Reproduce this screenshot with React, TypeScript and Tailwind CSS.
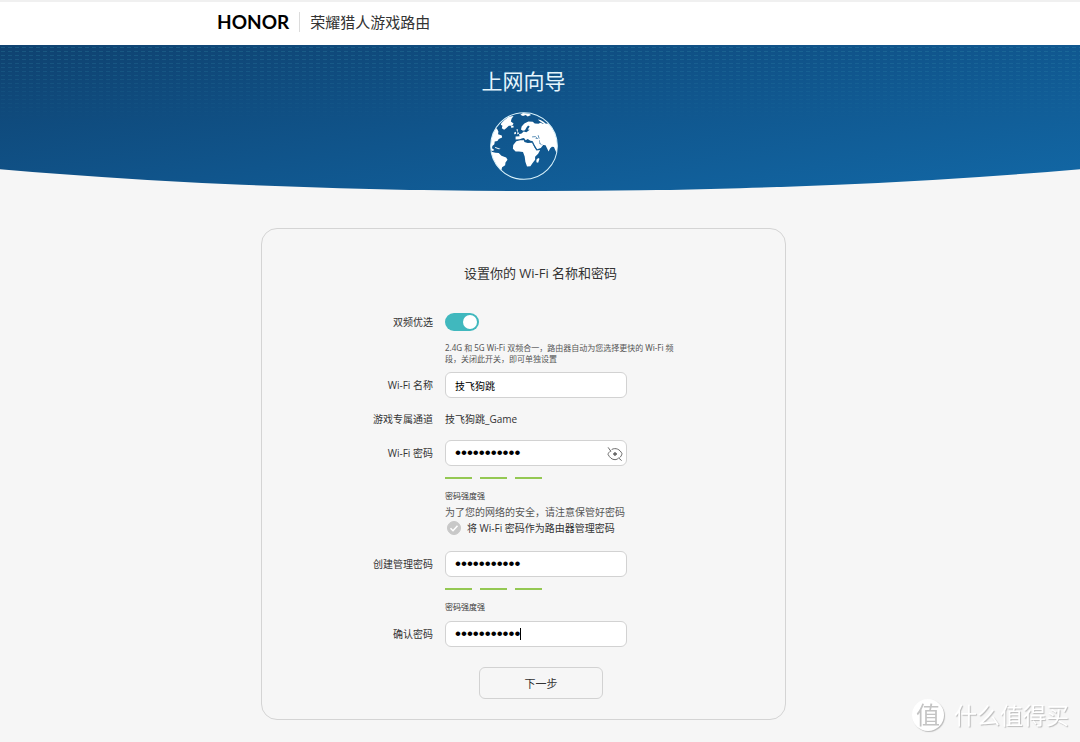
import { useState } from 'react';
import type { InputHTMLAttributes, ReactNode } from 'react';

function Globe() {
  return (
    <svg viewBox="0 0 202 202" className="w-[68px] h-[68px]" aria-hidden="true">
      <defs>
        <clipPath id="disc">
          <circle cx="101" cy="101" r="99" />
        </clipPath>
      </defs>
      <g clipPath="url(#disc)" fill="#fff">
        {/* Greenland and the Arctic */}
        <path d="M34 33L44 23L56 14L70 12L64 20L62 28L70 34L66 41L56 41L48 48L42 53L35 48L37 41L32 38Z" />
        <path d="M90 8L98 3L116 5L122 9L112 13L106 9L98 12Z" />
        <path d="M142 22L150 24L160 30L168 37L160 36L150 29Z" />
        {/* Americas */}
        <path d="M0 60L20 48L25 58L24 66L35 70L36 76L26 80L22 86L14 88L13 96L7 101L6 108L13 113L8 116L0 112Z" />
        <path d="M14 103L22 106L32 110L26 111L16 107Z" />
        <path d="M4 118L16 121L26 122L34 130L48 135L52 142L46 150L45 158L36 164L34 172L20 172L0 140Z" />
        {/* Europe and Asia */}
        <path d="M92 52L94 43L102 34L114 28L127 29L133 34L144 35L150 32L158 36L172 34L204 60L204 128L196 118L190 104L184 103L179 108L174 117L169 107L165 99L158 98L150 94L147 84L141 84L142 78L137 75L133 83L128 81L119 85L112 80L106 84L101 77L96 78L88 81L76 82L76 73L88 72L86 66L94 64L100 58L108 60L118 53L112 52L118 43L113 40L108 47L104 54L98 56Z" />
        <path d="M78 52L83 51L82 58L87 64L80 67L82 60Z" />
        <path d="M72 61L77 59L77 65L72 66Z" />
        <path d="M62 42L70 41L70 46L63 47Z" />
        {/* Turkey and Arabia */}
        <path d="M119 80L128 77L145 80L148 92L158 98L151 107L140 111L132 97L127 87L119 85Z" />
        {/* Africa */}
        <path d="M78 87L90 84L101 84L102 89L112 92L126 91L131 103L138 114L149 113L143 124L134 133L134 142L126 152L120 161L110 162L105 148L103 132L98 119L86 117L76 117L68 109L69 98Z" />
        <path d="M143 137L147 139L143 151L138 149L138 142Z" />
      </g>
      {/* inland seas */}
      <g stroke="#115c97" strokeWidth="2" fill="none">
        <path d="M125 74L136 73M143 69L146 79M126 92L138 112M146 92L153 97" />
      </g>
      <circle cx="101" cy="101" r="99" fill="none" stroke="#d9f2fb" strokeWidth="3" />
    </svg>
  );
}

function DashTexture() {
  return (
    <svg className="absolute inset-0 w-full h-full" aria-hidden="true">
      <defs>
        <pattern id="dashes" width="7" height="4" patternUnits="userSpaceOnUse">
          <rect x="1" y="2" width="4" height="1" fill="#3f9fb8" />
        </pattern>
        <linearGradient id="fade" x1="0" y1="0" x2="0" y2="1">
          <stop offset="0" stopColor="#fff" stopOpacity="0.24" />
          <stop offset="0.55" stopColor="#fff" stopOpacity="0" />
        </linearGradient>
        <mask id="dashMask">
          <rect width="100%" height="100%" fill="url(#fade)" />
        </mask>
      </defs>
      <rect width="100%" height="100%" fill="url(#dashes)" mask="url(#dashMask)" />
    </svg>
  );
}

function EyeOff() {
  return (
    <svg viewBox="0 0 48 42" className="w-4 h-3.5" fill="none" stroke="#6a6a6a" strokeWidth="3" strokeLinecap="round" aria-hidden="true">
      <path d="M4 2L11 12" />
      <path d="M11 12C6 15 4 18 3 22C8 32 15 38 24 38C28 38 32 36 35 33L43 40" />
      <path d="M15 7C26 1 39 7 45 20C44 25 42 29 38 32" />
      <circle cx="24" cy="21" r="4" fill="#6a6a6a" />
    </svg>
  );
}

function Row({ label, htmlFor, children }: { label: string; htmlFor?: string; children: ReactNode }) {
  const cls = 'w-[171px] shrink-0 text-right text-[10px] leading-4';
  return (
    <div className="flex items-center gap-3">
      {htmlFor ? <label htmlFor={htmlFor} className={cls}>{label}</label> : <span className={cls}>{label}</span>}
      {children}
    </div>
  );
}

function Field({ children, ...props }: InputHTMLAttributes<HTMLInputElement>) {
  return (
    <div className="relative w-[182px]">
      <input
        {...props}
        className={
          props.type === 'password'
            ? "block w-full h-[26px] px-[9px] rounded-md border border-[#d2d2d2] bg-white text-[17px] text-black font-['Liberation_Sans',sans-serif] outline-none"
            : 'block w-full h-[26px] px-[9px] rounded-md border border-[#d2d2d2] bg-white text-[10px] text-black outline-none'
        }
      />
      {children}
    </div>
  );
}

function Strength() {
  return (
    <div className="ml-[183px] mt-[11px]">
      <div className="flex gap-2">
        {[0, 1, 2].map((i) => (
          <span key={i} className="w-[27px] h-0.5 bg-[#94c853]" />
        ))}
      </div>
      <p className="mt-[11px] text-[8px] leading-3">密码强度强</p>
    </div>
  );
}

export default function App() {
  const [dualBand, setDualBand] = useState(true);
  const [ssid, setSsid] = useState('技飞狗跳');
  const [wifiPwd, setWifiPwd] = useState('hunter12345');
  const [adminPwd, setAdminPwd] = useState('hunter12345');
  const [confirmPwd, setConfirmPwd] = useState('hunter12345');
  const [visible, setVisible] = useState(false);
  const [samePwd, setSamePwd] = useState(true);

  return (
    <div lang="zh-CN" className="min-h-screen bg-[#f6f6f6] text-[#333] font-['Open_Sans','Noto_Sans_CJK_SC',sans-serif]">

      {/* Header */}
      <header className="h-[45px] bg-white border-t-2 border-[#f0f0f0] pr-[33px] pb-1">
        <div className="max-w-[613px] h-full mx-auto flex items-center gap-2.5">
          <span className="text-[19px] leading-6 font-bold text-black font-['Lato',sans-serif]">HONOR</span>
          <span className="w-px h-5 bg-[#dcdcdc]" />
          <span className="text-[15px] leading-6">荣耀猎人游戏路由</span>
        </div>
      </header>

      {/* Banner */}
      <section className="relative h-[146px] pr-[33px] bg-[linear-gradient(170deg,#0f4270_0%,#10558c_50%,#1268a6_100%)] [clip-path:ellipse(95%_100%_at_50%_0)]">
        <DashTexture />
        <div className="relative flex flex-col items-center pt-5">
          <h1 className="text-[21px] leading-8 text-[#e6f6fd]">上网向导</h1>
          <div className="mt-[15px]">
            <Globe />
          </div>
        </div>
      </section>

      {/* Setup form */}
      <main className="pt-[37px] pb-[21px] pr-[33px]">
        <form
          className="max-w-[525px] mx-auto pt-8 pb-5 rounded-2xl border border-[#d4d4d4]"
          onSubmit={(e) => e.preventDefault()}
        >
          <h2 className="pl-[34px] text-center text-[13px] leading-6">设置你的 Wi-Fi 名称和密码</h2>

          <div className="mt-7">
            <Row label="双频优选" htmlFor="dual">
              <span className="relative h-[18px]">
                <input
                  id="dual"
                  type="checkbox"
                  role="switch"
                  checked={dualBand}
                  onChange={(e) => setDualBand(e.target.checked)}
                  className="peer block appearance-none w-[34px] h-[18px] rounded-full bg-[#bbb] checked:bg-[#40b8be]"
                />
                <span className="absolute top-0.5 left-0.5 size-3.5 rounded-full bg-white pointer-events-none peer-checked:left-[18px]" />
              </span>
            </Row>
          </div>
          <p className="ml-[183px] mt-[11px] w-[244px] text-[8px] leading-[11px] text-[#555] font-['Noto_Sans','Noto_Sans_CJK_SC',sans-serif]">
            2.4G 和 5G Wi-Fi 双频合一，路由器自动为您选择更快的 Wi-Fi 频<br />段，关闭此开关，即可单独设置
          </p>

          <div className="mt-2 flex flex-col gap-2">
            <Row label="Wi-Fi 名称" htmlFor="ssid">
              <Field id="ssid" type="text" value={ssid} onChange={(e) => setSsid(e.target.value)} />
            </Row>
            <Row label="游戏专属通道">
              <span className="text-[10px] leading-[26px]">{ssid}_Game</span>
            </Row>
            <Row label="Wi-Fi 密码" htmlFor="wifiPwd">
              <Field
                id="wifiPwd"
                type={visible ? 'text' : 'password'}
                value={wifiPwd}
                onChange={(e) => setWifiPwd(e.target.value)}
              >
                <button
                  type="button"
                  aria-label="显示密码"
                  onClick={() => setVisible(!visible)}
                  className="absolute right-1 top-[7px]"
                >
                  <EyeOff />
                </button>
              </Field>
            </Row>
          </div>
          <Strength />
          <div className="ml-[183px] mt-0.5 text-[10px] leading-4">
            <p className="text-[#555]">为了您的网络的安全，请注意保管好密码</p>
            <label className="flex items-center pl-0.5 gap-1.5">
              <span className="relative size-3.5">
                <input
                  type="checkbox"
                  checked={samePwd}
                  onChange={(e) => setSamePwd(e.target.checked)}
                  className="peer block appearance-none size-3.5 rounded-full border border-[#c8c8c8] checked:bg-[#c8c8c8]"
                />
                <svg viewBox="0 0 14 14" className="absolute inset-0 size-3.5 pointer-events-none" fill="none" stroke="#fff" strokeWidth="1.5">
                  <path d="M3.5 7.2L6 9.7L10.5 4.8" />
                </svg>
              </span>
              将 Wi-Fi 密码作为路由器管理密码
            </label>
          </div>

          <div className="mt-[15px]">
            <Row label="创建管理密码" htmlFor="adminPwd">
              <Field id="adminPwd" type="password" value={adminPwd} onChange={(e) => setAdminPwd(e.target.value)} />
            </Row>
          </div>
          <Strength />
          <div className="mt-2">
            <Row label="确认密码" htmlFor="confirmPwd">
              <Field id="confirmPwd" type="password" value={confirmPwd} onChange={(e) => setConfirmPwd(e.target.value)}>
                <span className="absolute left-[75px] top-[7px] w-px h-3 bg-black" />
              </Field>
            </Row>
          </div>

          <button
            type="submit"
            className="block ml-[217px] mt-5 w-[124px] h-8 pt-0.5 rounded-md border border-[#d2d2d2] text-[11px]"
          >
            下一步
          </button>
        </form>
      </main>

      {/* Watermark */}
      <div className="fixed right-[11px] bottom-[11px] flex items-center gap-2.5 text-white">
        <span className="size-8 rounded-full bg-white flex items-center justify-center text-[24px] leading-8 text-[#c4c4c4] shadow-[1px_1px_1px_#bbb]">
          值
        </span>
        <span className="text-[23px] leading-8 [text-shadow:1px_1px_1px_#bbb]">什么值得买</span>
      </div>
    </div>
  );
}
